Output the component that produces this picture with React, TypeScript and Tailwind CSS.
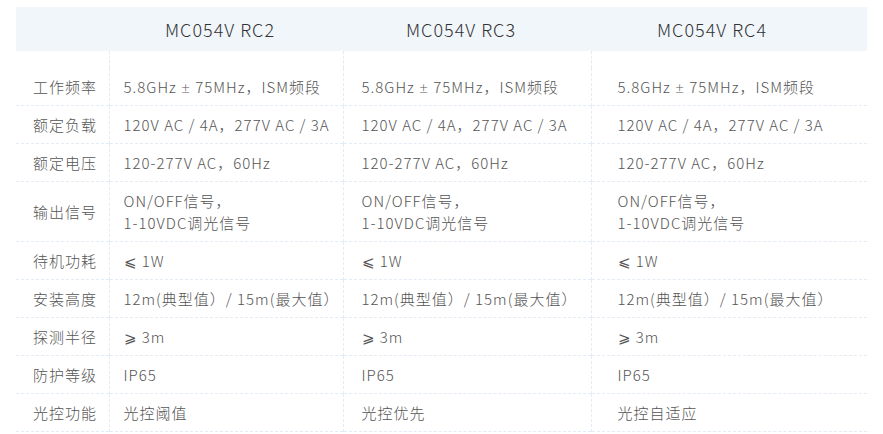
const FONT = { fontFamily: "'Noto Sans CJK SC', 'Noto Sans', sans-serif" }

const MODELS = ["MC054V RC2", "MC054V RC3", "MC054V RC4"]

const FREQ = "5.8GHz ± 75MHz，ISM频段"
const LOAD = "120V AC / 4A，277V AC / 3A"
const VOLT = "120-277V AC，60Hz"
const SIGNAL = "ON/OFF信号，\n1-10VDC调光信号"
const HEIGHT = "12m(典型值）/ 15m(最大值）"

const ROWS: { label: string; values: string[] }[] = [
  { label: "工作频率", values: [FREQ, FREQ, FREQ] },
  { label: "额定负载", values: [LOAD, LOAD, LOAD] },
  { label: "额定电压", values: [VOLT, VOLT, VOLT] },
  { label: "输出信号", values: [SIGNAL, SIGNAL, SIGNAL] },
  { label: "待机功耗", values: ["⩽ 1W", "⩽ 1W", "⩽ 1W"] },
  { label: "安装高度", values: [HEIGHT, HEIGHT, HEIGHT] },
  { label: "探测半径", values: ["⩾ 3m", "⩾ 3m", "⩾ 3m"] },
  { label: "防护等级", values: ["IP65", "IP65", "IP65"] },
  { label: "光控功能", values: ["光控阈值", "光控优先", "光控自适应"] },
]

const CELL_PAD = ["pl-[14px]", "pl-[18px]", "pl-[26px]"]
const HEAD_PAD = ["pr-[12px]", "pr-[12px]", "pr-[34px]"]

// the plus-minus sign is narrow in the original, not the CJK full-width one
function renderValue(v: string) {
  const parts = v.split("±")
  if (parts.length === 1) return v
  return (
    <>
      {parts[0]}
      <span style={{ fontFamily: "Lato, sans-serif" }}>±</span>
      {parts[1]}
    </>
  )
}

export default function App() {
  return (
    <div className="h-[434px] w-[883px] overflow-hidden bg-white pt-[7px]" style={FONT}>
      <table className="ml-4 w-[851px] table-fixed border-collapse">
        <colgroup>
          <col className="w-[93px]" />
          <col className="w-[234px]" />
          <col className="w-[248px]" />
          <col className="w-[276px]" />
        </colgroup>
        <thead>
          <tr className="h-[44px] bg-[#f1f6fb]">
            <th />
            {MODELS.map((m, i) => (
              <th
                key={m}
                className={`text-center text-[18px] font-light tracking-[1px] text-[#333] ${HEAD_PAD[i]}`}
              >
                {m}
              </th>
            ))}
          </tr>
        </thead>
        <tbody className="text-[15px] font-light leading-[22px] tracking-[1px] text-[#555]">
          <tr className="h-[17px]">
            <td />
            {MODELS.map((m) => (
              <td key={m} className="border-l border-dashed border-[#e3ebf4]" />
            ))}
          </tr>
          {ROWS.map((row) => (
            <tr key={row.label} className="border-b border-dashed border-[#e3ebf4]">
              <td className="whitespace-nowrap py-[7.5px] pl-[17px] align-middle">{row.label}</td>
              {row.values.map((v, i) => (
                <td
                  key={i}
                  className={`whitespace-pre py-[7.5px] align-middle border-l border-dashed border-[#e3ebf4] ${CELL_PAD[i]}`}
                >
                  {renderValue(v)}
                </td>
              ))}
            </tr>
          ))}
        </tbody>
      </table>
    </div>
  )
}
